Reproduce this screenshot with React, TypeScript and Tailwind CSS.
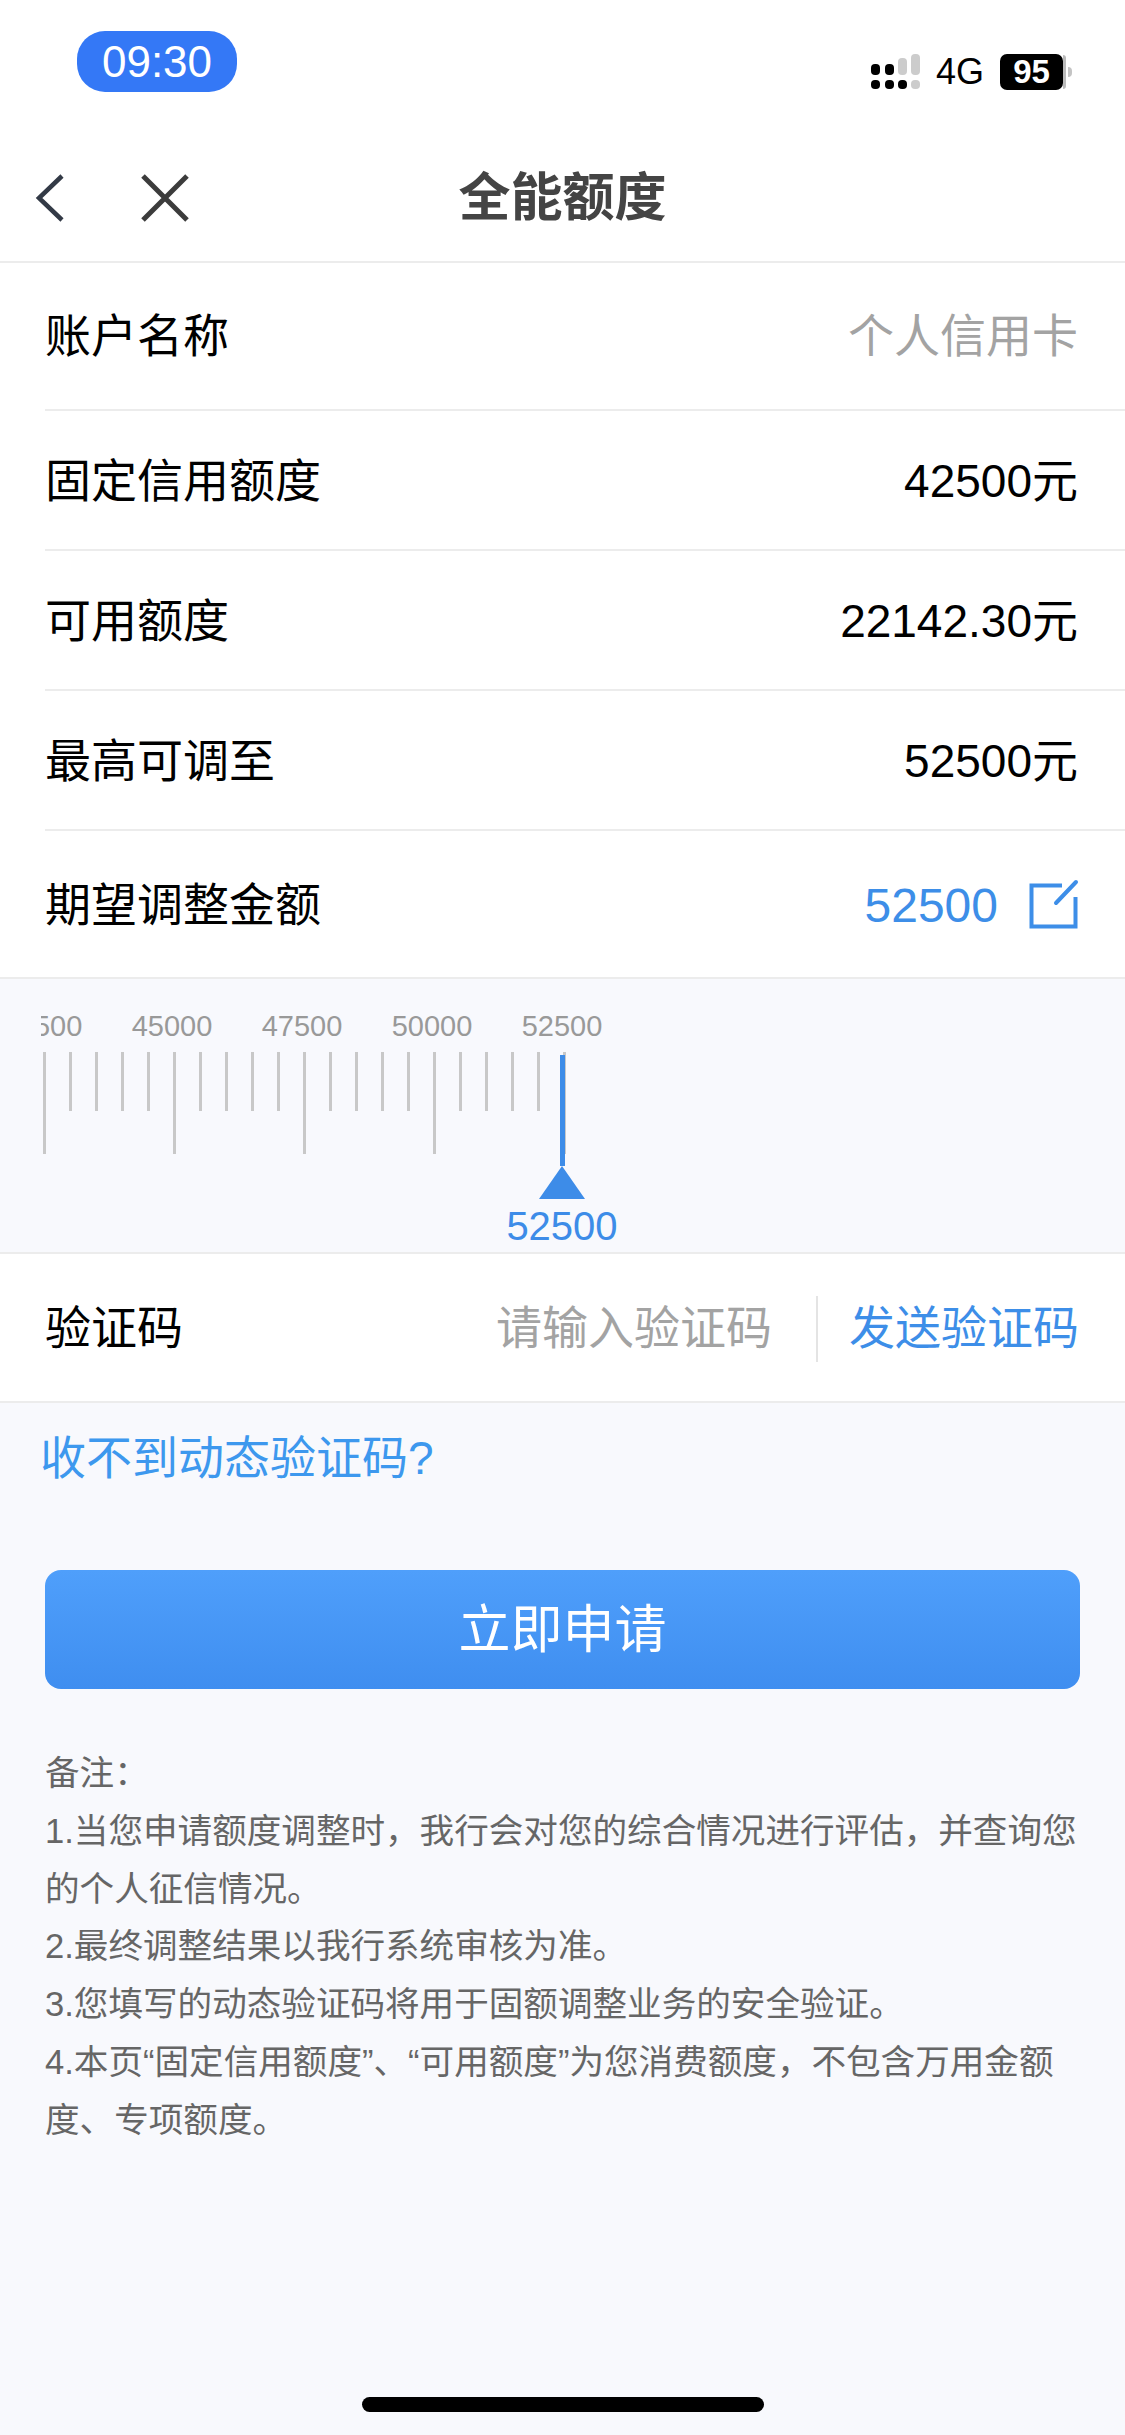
const font = "font-['Liberation_Sans','Noto_Sans_CJK_SC',sans-serif]";

const rows = [
  { label: "账户名称", value: "个人信用卡", muted: true },
  { label: "固定信用额度", value: "42500元" },
  { label: "可用额度", value: "22142.30元" },
  { label: "最高可调至", value: "52500元" },
];

const ticks = Array.from({ length: 21 }, (_, i) => i);
const scaleLabels = ["42500", "45000", "47500", "50000", "52500"];

function StatusBar() {
  return (
    <div className="flex h-[126px] justify-between">
      <div className="ml-[77px] mt-[31px] flex h-[61px] w-[160px] items-center justify-center rounded-[28px] bg-[#3478f6] text-[44px] text-white">
        09:30
      </div>
      <div className="mr-[53px] mt-[53px] flex h-[37px] items-center">
        <svg width="50" height="36" viewBox="0 0 50 36" className="mr-[15px]">
          <rect x="0" y="10" width="9" height="11" rx="4" fill="#000" />
          <rect x="14" y="10" width="9" height="11" rx="4" fill="#000" />
          <rect x="27" y="4" width="9" height="17" rx="4" fill="#ccc" />
          <rect x="40" y="0" width="9" height="21" rx="4" fill="#ccc" />
          <rect x="0" y="26" width="9" height="9" rx="4" fill="#000" />
          <rect x="14" y="26" width="9" height="9" rx="4" fill="#000" />
          <rect x="27" y="26" width="9" height="9" rx="4" fill="#000" />
          <rect x="40" y="26" width="9" height="9" rx="4" fill="#ccc" />
        </svg>
        <span className="mr-[16px] text-[36px] leading-none text-black">4G</span>
        <div className="flex h-[36px] w-[63px] items-center justify-center rounded-[7px] bg-black text-[33px] font-bold leading-none text-white">
          95
        </div>
        <div className="h-[34px] w-[3px] rounded-r bg-[#bbb]" />
        <div className="ml-[2px] h-[10px] w-[4px] rounded-r bg-[#c4c4c4]" />
      </div>
    </div>
  );
}

function NavBar() {
  return (
    <div className="grid h-[137px] grid-cols-[1fr_auto_1fr] items-center border-b-2 border-[#ececec] pt-[8px]">
      <div className="flex items-center">
        <svg width="30" height="50" viewBox="0 0 30 50" className="ml-[35px]">
          <path d="M27 3 L4 25 L27 47" fill="none" stroke="#333a46" strokeWidth="4.5" />
        </svg>
        <svg width="50" height="50" viewBox="0 0 50 50" className="ml-[75px]">
          <path d="M3 3 L47 47 M47 3 L3 47" fill="none" stroke="#3c3c3c" strokeWidth="5" />
        </svg>
      </div>
      <div className="text-[52px] font-bold leading-none text-[#444]">全能额度</div>
      <div />
    </div>
  );
}

function Ruler() {
  return (
    <div className="relative h-[275px] border-b-2 border-[#ececec]">
      <div className="ml-[41px] flex h-[73px] items-end overflow-hidden pb-[11px] text-[29px] leading-[30px] text-[#999]">
        <div className="ml-[-64px] flex">
          {scaleLabels.map((l) => (
            <div key={l} className="w-[130px] shrink-0 text-center">
              {l}
            </div>
          ))}
        </div>
      </div>
      <div className="ml-[43px] flex items-start gap-[23px]">
        {ticks.map((i) => (
          <div key={i} className={`w-[3px] bg-[#c8c8c8] ${i % 5 === 0 ? "h-[102px]" : "h-[59px]"}`} />
        ))}
      </div>
      {/* marker lies over the last tick */}
      <div className="absolute left-[505px] top-[76px] flex w-[114px] flex-col items-center">
        <div className="h-[111px] w-[5px] bg-[#3d8ce8]" />
        <div className="h-0 w-0 border-x-[23px] border-b-[33px] border-x-transparent border-b-[#3d8ce8]" />
        <div className="mt-[4px] text-[40px] leading-[46px] text-[#3d8ce8]">52500</div>
      </div>
    </div>
  );
}

export default function App() {
  return (
    <div className={`flex min-h-[2435px] flex-col bg-[#f8f9fd] ${font}`}>
      <div className="bg-white">
        <StatusBar />
        <NavBar />
        {rows.map((r, i) => (
          <div key={r.label} className={`ml-[45px] flex items-center justify-between border-b-2 border-[#ececec] pr-[47px] text-[46px] text-black ${i === 0 ? "h-[148px]" : "h-[140px] pt-[3px]"}`}>
            <span>{r.label}</span>
            <span className={r.muted ? "text-[#a3a3a3]" : ""}>{r.value}</span>
          </div>
        ))}
        <div className="flex h-[148px] items-center justify-between border-b-2 border-[#ececec] pl-[45px] pr-[46px] text-[46px] text-black">
          <span className="pt-[2px]">期望调整金额</span>
          <div className="flex items-center">
            <span className="mt-[4px] text-[48px] text-[#3d8ee8]">52500</span>
            <svg width="50" height="50" viewBox="0 0 50 50" className="ml-[31px]">
              <path d="M33 6.5 H2.5 V47.5 H46.5 V18" fill="none" stroke="#3d8ee8" strokeWidth="4" />
              <path d="M27 24 L47 3" fill="none" stroke="#3d8ee8" strokeWidth="4" strokeLinecap="round" />
            </svg>
          </div>
        </div>
      </div>

      <Ruler />

      <div className="flex h-[149px] items-center border-b-2 border-[#ececec] bg-white pl-[45px] pr-[46px] pt-[2px] text-[46px] text-black">
        <span>验证码</span>
        <span className="ml-auto text-[#a3a3a3]">请输入验证码</span>
        <div className="ml-[44px] mr-[31px] h-[66px] w-[2px] bg-[#e4e4e4]" />
        <span className="text-[#3d8ee8]">发送验证码</span>
      </div>

      <div className="pl-[40px] pt-[24px] text-[46px] leading-[62px] text-[#3d98ee]">收不到动态验证码?</div>

      <button className="mx-[45px] mt-[81px] h-[119px] rounded-[16px] bg-gradient-to-b from-[#4f9ffb] to-[#3f8ef0] text-[52px] text-white">
        立即申请
      </button>

      <div className="ml-[45px] mr-[44px] mt-[56px] text-[34.6px] leading-[57.8px] text-[#666]">
        <p>备注：</p>
        <p>1.当您申请额度调整时，我行会对您的综合情况进行评估，并查询您的个人征信情况。</p>
        <p>2.最终调整结果以我行系统审核为准。</p>
        <p>3.您填写的动态验证码将用于固额调整业务的安全验证。</p>
        <p>4.本页“固定信用额度”、“可用额度”为您消费额度，不包含万用金额度、专项额度。</p>
      </div>

      <div className="mb-[23px] mt-auto flex justify-center">
        <div className="h-[15px] w-[402px] rounded-full bg-black" />
      </div>
    </div>
  );
}
